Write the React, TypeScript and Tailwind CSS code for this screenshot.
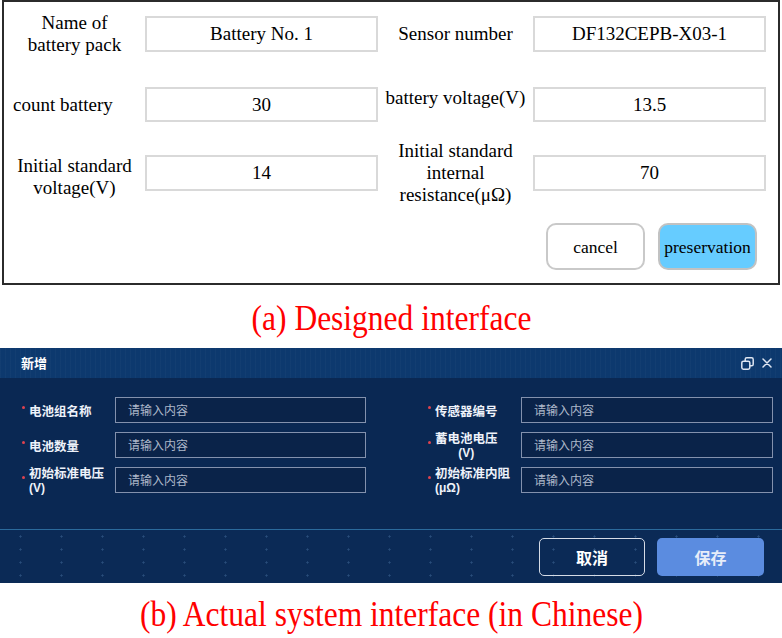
import React from "react";

const serif = "font-['Liberation_Serif','Times_New_Roman',serif]";
const cjk = "font-['Noto_Sans_CJK_SC','Noto_Sans',sans-serif]";
const latin = "font-['Liberation_Sans','Arial',sans-serif]";

function DInput({ value }: { value: string }) {
  return (
    <div className="h-full w-[233px] border-2 border-[#d9d9d9] flex items-center justify-center text-[19px] text-black">
      {value}
    </div>
  );
}

function CCell({ main, sub, center }: { main: string; sub?: string; center?: boolean }) {
  return (
    <div className="h-full w-[93px] flex items-center">
      <span className="w-[3px] h-[3px] rounded-full bg-[#e0424f] -translate-y-[3px] shrink-0" />
      <div className={`ml-[4px] font-bold text-[#eef2fa] flex flex-col ${center ? "items-center" : "items-start"}`}>
        <div className="text-[12.5px] leading-[13px]">{main}</div>
        {sub && <div className={`mt-[3px] text-[12px] leading-[12px] ${latin}`}>{sub}</div>}
      </div>
    </div>
  );
}

function CInput({ w }: { w: string }) {
  return (
    <div className={`h-full ${w} border border-[#8391ad] bg-[#0a2349] flex items-center pl-[12px] text-[12px] text-[#aeb8ca]`}>
      请输入内容
    </div>
  );
}

export default function App() {
  return (
    <div className={`w-[782px] h-[638px] bg-white overflow-hidden ${serif}`}>
      {/* (a) Designed interface */}
      <div className="ml-[2px] w-[778px] h-[285px] border-2 border-[#2b2b2b] pt-[14px] text-black text-[19px] leading-[22px]">
        <div className="flex h-[36px]">
          <div className="w-[141px] h-full flex items-center justify-center text-center">
            <div>Name of<br />battery pack</div>
          </div>
          <DInput value="Battery No. 1" />
          <div className="w-[155px] h-full flex items-center justify-center text-center">
            <div>Sensor number</div>
          </div>
          <DInput value="DF132CEPB-X03-1" />
        </div>
        <div className="flex h-[35px] mt-[35px]">
          <div className="w-[141px] h-full flex items-center pl-[9px]">
            <div>count battery</div>
          </div>
          <DInput value="30" />
          <div className="w-[155px] h-full flex items-center justify-center text-center">
            <div className="pb-[13px] whitespace-nowrap">battery voltage(V)</div>
          </div>
          <DInput value="13.5" />
        </div>
        <div className="flex h-[36px] mt-[33px]">
          <div className="w-[141px] h-full flex items-center justify-center text-center">
            <div className="pt-[8px]">Initial standard<br />voltage(V)</div>
          </div>
          <DInput value="14" />
          <div className="w-[155px] h-full flex items-center justify-center text-center">
            <div>Initial standard<br />internal<br />resistance(μΩ)</div>
          </div>
          <DInput value="70" />
        </div>
        <div className="flex justify-end gap-[13px] pr-[21px] mt-[32px]">
          <div className="w-[99px] h-[47px] rounded-[10px] border-2 border-[#c9c9c9] bg-white flex items-center justify-center text-[17.5px]">
            cancel
          </div>
          <div className="w-[99px] h-[47px] rounded-[10px] border-2 border-[#c2c2c2] bg-[#66ccff] flex items-center justify-center text-[17.5px]">
            preservation
          </div>
        </div>
      </div>

      {/* caption a */}
      <div className="mt-[14px] h-[40px] text-center leading-[40px] text-[35px] text-[#ff0000]">
        <span className="inline-block scale-x-90">(a) Designed interface</span>
      </div>

      {/* (b) Actual system */}
      <div className={`mt-[9px] w-[782px] h-[235px] bg-[#0a2853] flex flex-col ${cjk}`}>
        <div className="h-[30px] shrink-0 bg-[#0d396e] bg-[repeating-linear-gradient(90deg,rgba(255,255,255,0.025)_0px,rgba(255,255,255,0.025)_1px,transparent_1px,transparent_5px)] flex items-center justify-between pl-[21px] pr-[10px]">
          <span className="text-[13px] font-bold text-white">新增</span>
          <div className="flex items-center gap-[8px]">
            <svg width="13" height="13" viewBox="0 0 13 13" fill="none">
              <rect x="4.2" y="0.8" width="8" height="8" rx="1.6" stroke="#dfe6f2" strokeWidth="1.5" />
              <rect x="0.8" y="4.2" width="8" height="8" rx="1.6" fill="#0d396e" stroke="#dfe6f2" strokeWidth="1.5" />
            </svg>
            <svg width="10" height="10" viewBox="0 0 10 10" fill="none">
              <path d="M1 1 L9 9 M9 1 L1 9" stroke="#dfe6f2" strokeWidth="1.5" strokeLinecap="round" />
            </svg>
          </div>
        </div>
        <div className="h-[151px] shrink-0 pt-[19px]">
          <div className="flex h-[26px]">
            <div className="ml-[22px]"><CCell main="电池组名称" /></div>
            <CInput w="w-[251px]" />
            <div className="ml-[62px]"><CCell main="传感器编号" /></div>
            <CInput w="w-[252px]" />
          </div>
          <div className="flex h-[26px] mt-[9px]">
            <div className="ml-[22px]"><CCell main="电池数量" /></div>
            <CInput w="w-[251px]" />
            <div className="ml-[62px]"><CCell main="蓄电池电压" sub="(V)" center /></div>
            <CInput w="w-[252px]" />
          </div>
          <div className="flex h-[26px] mt-[9px]">
            <div className="ml-[22px]"><CCell main="初始标准电压" sub="(V)" /></div>
            <CInput w="w-[251px]" />
            <div className="ml-[62px]"><CCell main="初始标准内阻" sub="(μΩ)" /></div>
            <CInput w="w-[252px]" />
          </div>
        </div>
        <div className="h-px shrink-0 bg-[#2b6a9c]" />
        <div className="flex-1 bg-[#0b2a56] bg-[radial-gradient(circle,rgba(120,170,220,0.28)_0.8px,transparent_1.4px)] bg-[length:41px_13px] flex justify-end items-start gap-[12px] pt-[8px] pr-[18px]">
          <div className="w-[106px] h-[38px] rounded-[5px] border-[1.5px] border-[#d5dbe6] flex items-center justify-center text-[16px] font-bold text-white">
            取消
          </div>
          <div className="w-[107px] h-[38px] rounded-[5px] bg-[#5b8ce0] flex items-center justify-center text-[16px] font-bold text-[#e6edf9]">
            保存
          </div>
        </div>
      </div>

      {/* caption b */}
      <div className="mt-[12px] h-[40px] text-center leading-[40px] text-[35px] text-[#ff0000]">
        <span className="inline-block scale-x-90">(b) Actual system interface (in Chinese)</span>
      </div>
    </div>
  );
}
